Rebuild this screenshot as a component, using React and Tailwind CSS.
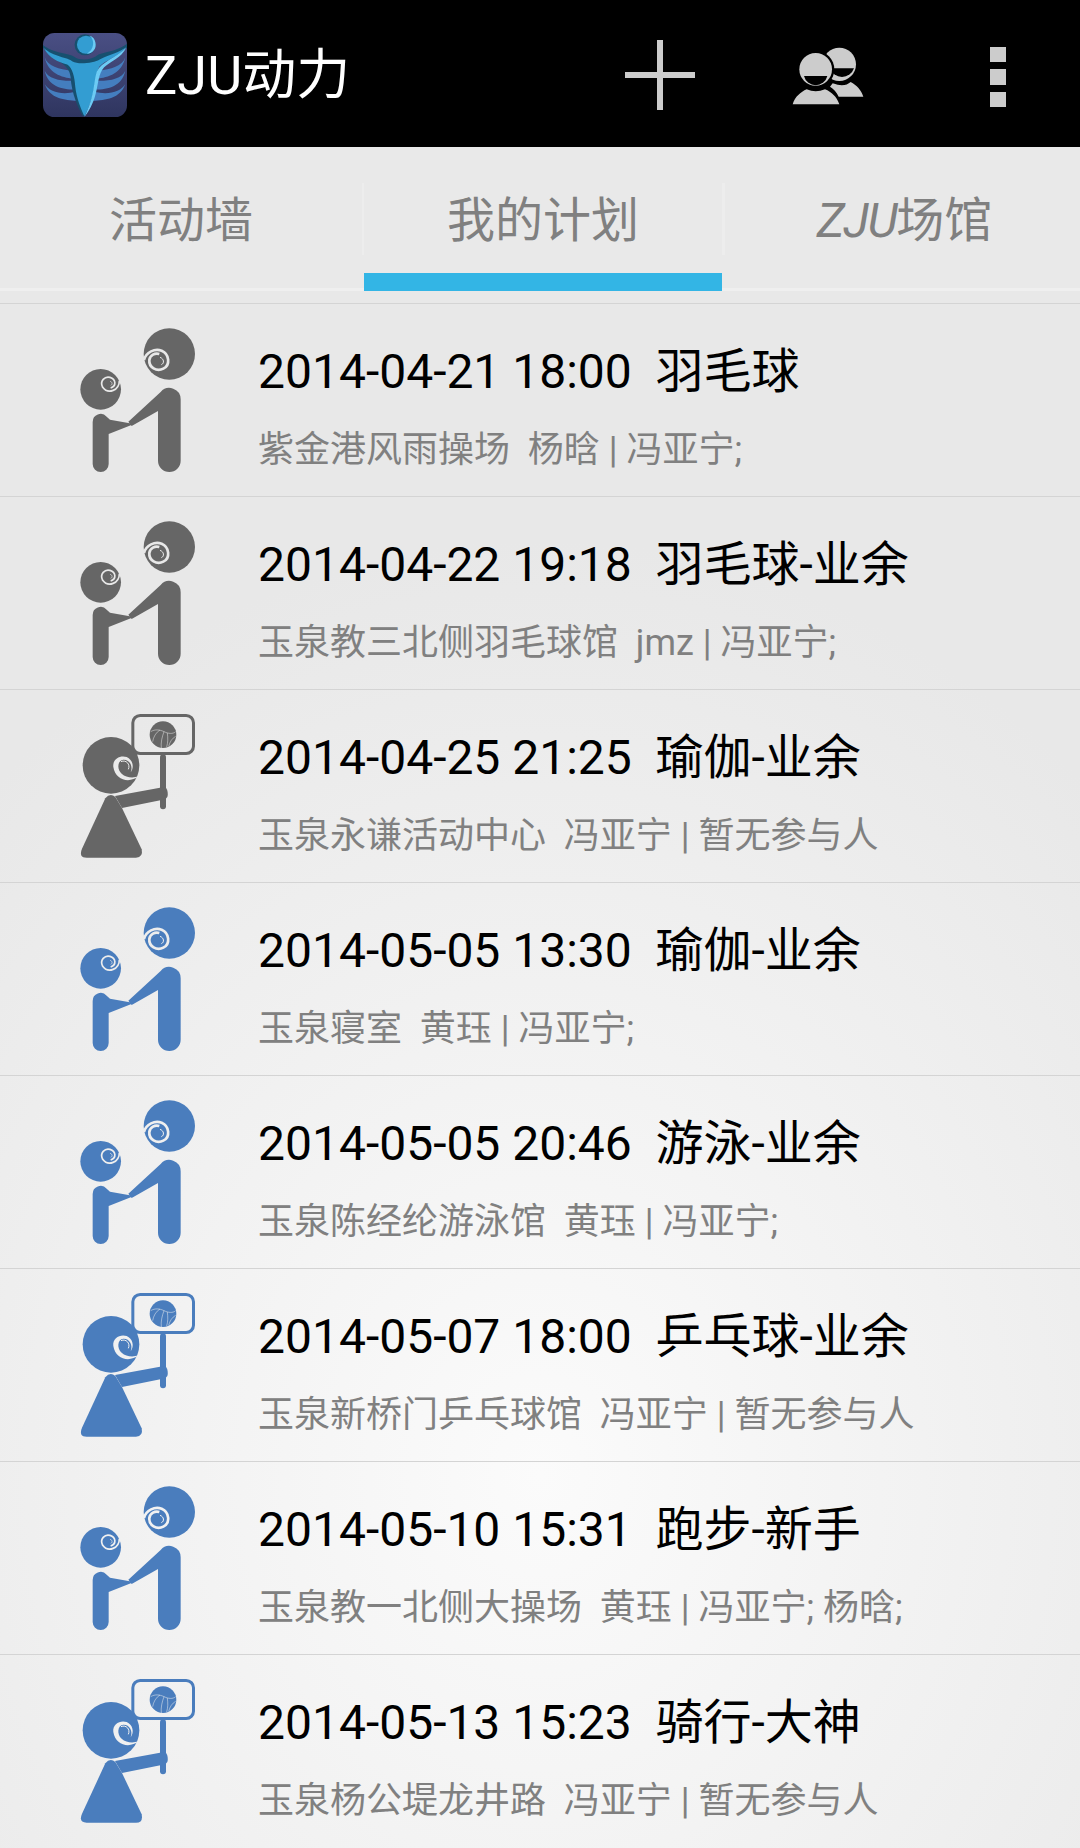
import { useId } from 'react'

const plans = [
  { kind: 'pair', color: 'gray', title: '2014-04-21 18:00  羽毛球', sub: '紫金港风雨操场  杨晗 | 冯亚宁;' },
  { kind: 'pair', color: 'gray', title: '2014-04-22 19:18  羽毛球-业余', sub: '玉泉教三北侧羽毛球馆  jmz | 冯亚宁;' },
  { kind: 'sign', color: 'gray', title: '2014-04-25 21:25  瑜伽-业余', sub: '玉泉永谦活动中心  冯亚宁 | 暂无参与人' },
  { kind: 'pair', color: 'blue', title: '2014-05-05 13:30  瑜伽-业余', sub: '玉泉寝室  黄珏 | 冯亚宁;' },
  { kind: 'pair', color: 'blue', title: '2014-05-05 20:46  游泳-业余', sub: '玉泉陈经纶游泳馆  黄珏 | 冯亚宁;' },
  { kind: 'sign', color: 'blue', title: '2014-05-07 18:00  乒乓球-业余', sub: '玉泉新桥门乒乓球馆  冯亚宁 | 暂无参与人' },
  { kind: 'pair', color: 'blue', title: '2014-05-10 15:31  跑步-新手', sub: '玉泉教一北侧大操场  黄珏 | 冯亚宁; 杨晗;' },
  { kind: 'sign', color: 'blue', title: '2014-05-13 15:23  骑行-大神', sub: '玉泉杨公堤龙井路  冯亚宁 | 暂无参与人' },
]

// two people holding hands
const PairIcon = ({ className }) => {
  const id = useId()
  return (
    <svg viewBox="0 0 480 540" className={`w-[160px] h-[180px] mt-[6px] shrink-0 ${className}`}>
      <mask id={id}>
        <rect width="480" height="540" fill="white" />
        <path d="M252 150 C258 125 285 115 305 122 C328 132 332 165 310 176 C290 186 266 172 268 150 C270 135 285 128 298 132" fill="none" stroke="black" strokeWidth="8" />
        <path d="M300 142 C312 146 314 160 304 164" fill="none" stroke="black" strokeWidth="3" />
        <path d="M178 212 C178 240 145 255 128 232 C118 212 135 198 150 202 C168 207 170 228 152 234" fill="none" stroke="black" strokeWidth="5" />
        <path d="M150 214 C158 216 158 224 152 226" fill="none" stroke="black" strokeWidth="2" />
      </mask>
      <g fill="currentColor" mask={`url(#${id})`}>
        <circle cx="328" cy="132" r="77" />
        <circle cx="122" cy="238" r="61" />
      </g>
      <path fill="currentColor" d="M98 336 A24 24 0 0 1 140 320 L150 329 L222 342 L146 372 V462 A24 24 0 0 1 98 462 Z" />
      <path fill="currentColor" d="M294 303 L215 348 L205 335 L302 246 A34 34 0 0 1 362 268 V452 A34 34 0 0 1 294 452 Z" />
    </svg>
  )
}

// person holding up a sign with a volleyball
const SignIcon = ({ className }) => {
  const id = useId()
  return (
    <svg viewBox="0 0 480 540" className={`w-[160px] h-[180px] mt-[11px] shrink-0 ${className}`}>
      <mask id={`${id}h`}>
        <rect width="480" height="540" fill="white" />
        <rect x="216" y="41" width="186" height="118" rx="24" fill="black" />
        <path fill="black" d="M236 226 C208 248 166 238 160 198 C157 172 182 162 200 168 C218 176 224 198 212 214 C220 195 208 175 190 176 C172 178 170 205 185 218 C198 230 218 232 236 226 Z" />
        <path d="M183 182 C198 175 212 190 205 205" fill="none" stroke="black" strokeWidth="3" />
      </mask>
      <mask id={`${id}b`}>
        <rect width="480" height="540" fill="white" />
        <g fill="none" stroke="black" strokeWidth="1.5">
          <path d="M272 92 C285 84 300 86 312 92 C325 98 338 100 347 92" />
          <path d="M312 92 C306 108 302 125 304 142" />
          <path d="M278 122 C280 108 288 94 300 87" />
          <path d="M326 136 C330 122 336 112 347 106" />
          <path d="M322 96 C324 112 324 124 320 138" />
        </g>
      </mask>
      <circle cx="153" cy="193" r="85" fill="currentColor" mask={`url(#${id}h)`} />
      <rect x="218.5" y="43.5" width="182" height="114" rx="22" fill="none" stroke="currentColor" strokeWidth="9" />
      <circle cx="309" cy="101" r="40" fill="currentColor" mask={`url(#${id}b)`} />
      <rect x="300" y="160" width="18" height="165" rx="9" fill="currentColor" />
      <path fill="currentColor" d="M165 285 L300 260 L318 260 Q326 272 322 288 L316 295 L186 321 Z" />
      <path fill="currentColor" d="M136 292 Q150 274 166 288 L186 321 L245 445 Q250 470 228 470 H80 Q55 470 66 443 Z" />
    </svg>
  )
}

const Logo = () => (
  <svg viewBox="40 40 250 250" className="w-[84px] h-[84px] shrink-0">
    <defs>
      <linearGradient id="logo-bg" x1="0" y1="0" x2="0" y2="1">
        <stop offset="0" stopColor="#4a4f84" />
        <stop offset="1" stopColor="#2f355f" />
      </linearGradient>
      <clipPath id="logo-clip">
        <rect x="40" y="40" width="250" height="250" rx="34" />
      </clipPath>
    </defs>
    <g clipPath="url(#logo-clip)">
      <rect x="40" y="40" width="250" height="250" fill="url(#logo-bg)" />
      {[0, 1].map((side) => (
        <g key={side} fill="#447ebf" transform={side ? 'translate(330 0) scale(-1 1)' : undefined}>
          <path d="M45 112 C52 138 90 148 124 152 L130 176 C95 172 55 160 45 112 Z" />
          <path d="M45 152 C55 176 95 184 132 182 L135 208 C95 208 55 198 45 152 Z" />
          <path d="M45 192 C58 216 100 226 138 214 L141 242 C105 240 60 236 45 192 Z" />
        </g>
      ))}
      <path fill="#17506f" d="M40 76 C70 102 120 100 135 112 C150 122 185 122 205 104 C230 96 270 90 290 72 L290 84 C260 105 220 122 205 130 L160 290 C145 265 125 220 122 170 C118 130 75 125 40 84 Z" />
      <path fill="#339dd2" d="M42 84 C70 112 115 112 128 125 C145 135 190 130 210 118 C240 104 265 100 288 82 C268 108 225 122 208 140 C196 160 196 200 185 235 C178 258 170 275 163 288 C152 262 140 235 136 200 C134 170 128 145 112 134 C85 125 60 118 42 84 Z" />
      <path fill="#6ccbf4" d="M288 84 C255 115 215 125 200 155 C190 185 195 225 163 290 C175 275 190 250 197 220 C205 190 205 160 222 142 C240 125 272 115 288 84 Z" />
      <circle cx="165" cy="75" r="31" fill="#17506f" />
      <circle cx="168" cy="75" r="27" fill="#339dd2" />
      <path fill="#6ccbf4" d="M178 48 C196 60 192 90 170 102 C190 100 200 85 196 68 C194 58 188 50 178 48 Z" />
    </g>
  </svg>
)

const UsersIcon = () => (
  <svg viewBox="0 0 270 240" className="w-[90px] h-[80px]">
    <circle cx="178" cy="85" r="50" fill="#cccccc" />
    <path d="M150 97 H222 A38 38 0 0 1 150 97 Z" fill="#000000" />
    <path d="M158 142 C185 152 200 148 212 138 C230 148 244 162 250 182 H176 C170 168 160 158 150 152 Z" fill="#cccccc" />
    <circle cx="107" cy="100" r="56" fill="#000000" />
    <circle cx="107" cy="100" r="49" fill="#cccccc" />
    <path d="M72 120 H142 A36 36 0 0 1 72 120 Z" fill="#000000" />
    <path d="M38 205 C45 182 62 168 80 160 Q107 172 135 160 C155 168 170 182 178 205 Z" fill="#cccccc" />
  </svg>
)

const PlanRow = ({ plan }) => {
  const Icon = plan.kind === 'pair' ? PairIcon : SignIcon
  return (
    <div className="flex h-[193px] pl-[60px] border-t border-[#d4d4d4]">
      <Icon className={plan.color === 'gray' ? 'text-[#666666]' : 'text-[#4a7dbd]'} />
      <div className="ml-[38px] flex flex-col whitespace-pre">
        <div className="mt-[40px] text-[48px] leading-[56px] text-black">{plan.title}</div>
        <div className="mt-[29px] text-[36px] leading-[42px] text-[#808080]">{plan.sub}</div>
      </div>
    </div>
  )
}

export default function App() {
  return (
    <div className="w-[1080px] h-[1848px] overflow-hidden flex flex-col bg-[#e9e9e9] font-['Roboto','Noto_Sans_CJK_SC',sans-serif]">
      {/* Action bar */}
      <div className="flex items-center h-[147px] bg-black shrink-0">
        <div className="ml-[43px] mt-[3px]"><Logo /></div>
        <div className="ml-[18px] text-[54px] leading-[64px] text-white mt-[5px]">ZJU动力</div>
        <div className="ml-auto flex">
          <button className="relative w-[168px] h-[147px] flex items-center justify-center">
            <span className="block w-[70px] h-[6px] bg-[#cccccc] mt-[2px]" />
            <span className="absolute w-[6px] h-[70px] bg-[#cccccc] mt-[2px]" />
          </button>
          <button className="w-[168px] h-[147px] flex items-center justify-center pt-[4px] pr-[6px]">
            <UsersIcon />
          </button>
          <button className="w-[168px] h-[147px] pl-[4px] pt-[6px] flex flex-col items-center justify-center gap-[7px]">
            <span className="block w-[16px] h-[15px] bg-[#cccccc]" />
            <span className="block w-[16px] h-[16px] bg-[#cccccc]" />
            <span className="block w-[16px] h-[15px] bg-[#cccccc]" />
          </button>
        </div>
      </div>

      {/* Tabs */}
      <div className="flex h-[144px] shrink-0 border-b-[3px] border-[#efefef] text-[48px] text-[#808080] bg-[#e9e9e9]">
        <div className="w-[362px] flex items-center justify-center pt-[6px]">活动墙</div>
        <div className="w-[2px] h-[72px] mt-[36px] bg-[#ededed]" />
        <div className="relative w-[358px] flex items-center justify-center pt-[6px]">
          我的计划
          <div className="absolute left-0 right-0 -bottom-[3px] h-[18px] bg-[#33b5e5]" />
        </div>
        <div className="w-[3px] h-[72px] mt-[36px] bg-[#ededed]" />
        <div className="flex-1 flex items-center justify-center pt-[6px] pl-[4px]"><span className="italic tracking-[-1.5px]">ZJU</span>场馆</div>
      </div>

      {/* Plan list */}
      <div className="flex-1 pt-[12px] bg-[radial-gradient(ellipse_75%_60%_at_50%_76%,#fbfbfb_0%,#e8e8e8_100%)]">
        {plans.map((plan) => <PlanRow key={plan.title} plan={plan} />)}
      </div>
    </div>
  )
}
